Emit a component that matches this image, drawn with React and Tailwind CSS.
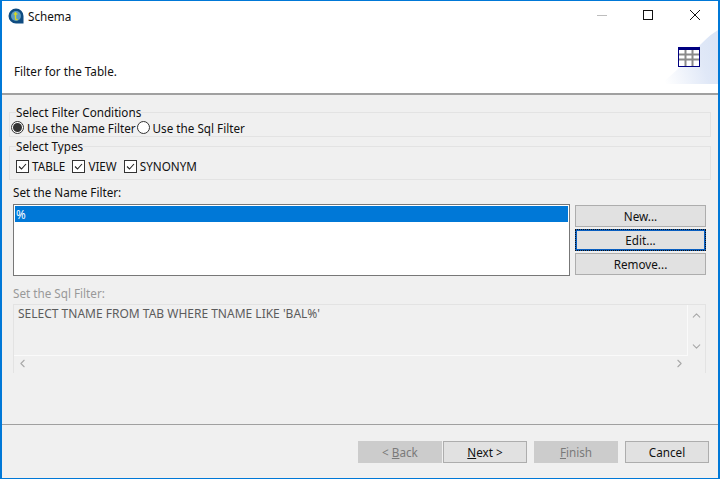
import { ChevronUp, ChevronDown, ChevronLeft, ChevronRight } from "lucide-react";

const font = { fontFamily: '"Noto Sans", "Open Sans", sans-serif' };

const AppIcon = () => (
  <svg width="16" height="16" viewBox="0 0 16 16" className="shrink-0">
    <path d="M8 .5a7.5 7.5 0 1 0 0 15h7.5V8A7.5 7.5 0 0 0 8 .5z" fill="#0f4c81" />
    <circle cx="8" cy="8" r="5" fill="#5f9cc4" />
    <path d="M7.5 4v6.5c0 1 .8 1.3 2.2 1M5.8 6h3.6" fill="none" stroke="#d8d820" strokeWidth="1.4" />
  </svg>
);

const TableIcon = () => (
  <svg width="22" height="20" viewBox="0 0 22 20" className="relative shrink-0">
    <rect x="0" y="0" width="22" height="20" fill="#000080" />
    <rect x="1" y="3" width="20" height="16" fill="#fff" />
    <path d="M1 7.5h20M1 12.5h20M7.5 3v16M14.5 3v16" stroke="#8a8a8a" strokeWidth="2" />
  </svg>
);

const CaptionButtons = () => (
  <svg width="104" height="11" viewBox="0 0 104 11" className="ml-auto mr-[17px]">
    <path d="M0 5.5h10" stroke="#bdbdbd" fill="none" />
    <rect x="46.5" y=".5" width="9" height="9" fill="none" stroke="#111" strokeWidth="1" />
    <path d="M93 0l10 10M103 0L93 10" stroke="#111" fill="none" />
  </svg>
);

const Radio = ({ checked, label }) => (
  <label className="flex items-center gap-[3px]">
    <span className="flex h-[13px] w-[13px] items-center justify-center rounded-full border border-[#333] bg-white">
      {checked && <span className="h-[9px] w-[9px] rounded-full bg-[#333]" />}
    </span>
    <span>{label}</span>
  </label>
);

const Check = ({ label }) => (
  <label className="flex items-center gap-[3px]">
    <span className="flex h-[13px] w-[13px] items-center justify-center border border-[#333] bg-white">
      <svg width="11" height="11" viewBox="0 0 11 11">
        <path d="M2 5.5l2.5 2.5L9 3" fill="none" stroke="#222" strokeWidth="1.1" />
      </svg>
    </span>
    <span>{label}</span>
  </label>
);

const Group = ({ title, className, children }) => (
  <fieldset className={`border border-[#e3e3e3] pl-[1px] ${className}`}>
    <legend className="ml-[5px] h-[13px] px-0 leading-[13px]">{title}</legend>
    {children}
  </fieldset>
);

const SideButton = ({ children, focused }) => (
  <button
    type="button"
    className={`flex h-[22px] w-[131px] items-center justify-center bg-[#e1e1e1] ${
      focused
        ? "border-2 border-[#0a5fc0] outline outline-dotted outline-[#111] -outline-offset-1"
        : "border border-[#adadad]"
    }`}
  >
    {children}
  </button>
);

const WizardButton = ({ children, disabled }) => (
  <button
    type="button"
    className={`flex h-[22px] w-[84px] items-center justify-center border ${
      disabled ? "border-[#cccccc] bg-[#cccccc] text-[#7a7a7a]" : "border-[#adadad] bg-[#e1e1e1] text-[#111]"
    }`}
  >
    {children}
  </button>
);

export default function App() {
  return (
    <div
      style={font}
      className="flex h-[479px] w-[720px] flex-col overflow-hidden border-x-2 border-y border-[#0078d7] bg-[#f0f0f0] text-[11.7px] leading-[16px] text-[#111]"
    >
      {/* barra de titulo */}
      <div className="flex h-[29px] shrink-0 items-center bg-white pl-[6px]">
        <AppIcon />
        <span className="ml-[4px]">Schema</span>
        <CaptionButtons />
      </div>

      {/* cabecera */}
      <div className="relative flex h-[65px] shrink-0 items-start justify-between border-b-2 border-[#a0a0a0] bg-white pb-[10px] pl-[12px]">
        <svg width="58" height="54" viewBox="0 0 58 54" className="absolute right-0 top-0">
          <defs>
            <linearGradient id="headerFade" x1="0" y1="0.7" x2="1" y2="0.4">
              <stop offset="0" stopColor="#ffffff" />
              <stop offset="0.7" stopColor="#e0e8f7" />
              <stop offset="1" stopColor="#dbe5f6" />
            </linearGradient>
          </defs>
          <path d="M0 54C24 38 38 12 58 0V54z" fill="url(#headerFade)" />
        </svg>
        <span className="mt-[33px]">Filter for the Table.</span>
        <div className="relative mr-[18px] mt-[17px]">
          <TableIcon />
        </div>
      </div>

      {/* contenido */}
      <div className="flex min-h-0 flex-1 flex-col pl-[7px] pr-[7px] pt-[11px]">
        <Group title="Select Filter Conditions" className="h-[31px]">
          <div className="-mt-[1px] flex h-[19px] items-center gap-[1px]">
            <Radio checked label="Use the Name Filter" />
            <Radio label="Use the Sql Filter" />
          </div>
        </Group>

        <Group title="Select Types" className="mt-[3px] h-[40px]">
          <div className="mt-[3px] flex h-[20px] items-center gap-[7px] pl-[5px]">
            <Check label="TABLE" />
            <Check label="VIEW" />
            <Check label="SYNONYM" />
          </div>
        </Group>

        <div className="mt-[4px] pl-[4px]">Set the Name Filter:</div>

        <div className="mt-[4px] flex gap-[5px] pl-[4px]">
          <div className="h-[72px] w-[557px] border border-[#777] bg-white p-[1px]">
            <div className="flex h-[16px] items-center bg-[#0078d7] pl-[1px] text-white">%</div>
          </div>
          <div className="flex flex-col gap-[2px] pt-[1px]">
            <SideButton>New...</SideButton>
            <SideButton focused>Edit...</SideButton>
            <SideButton>Remove...</SideButton>
          </div>
        </div>

        <div className="mt-[9px] pl-[4px] text-[#999]">Set the Sql Filter:</div>

        <div className="ml-[4px] mt-[3px] flex h-[69px] w-[693px] flex-col border-l border-r border-t border-[#e3e3e3] text-[#5c5c5c]">
          <div className="flex min-h-0 flex-1">
            <div className="flex-1 border-b border-r border-[#fafafa] pl-[4px] pt-[1px] text-[12px]">
              SELECT TNAME FROM TAB WHERE TNAME LIKE 'BAL%'
            </div>
            <div className="flex w-[17px] flex-col items-center justify-between pb-[3px] pt-[4px] text-[#a8a8a8]">
              <ChevronUp size={13} />
              <ChevronDown size={13} />
            </div>
          </div>
          <div className="flex h-[17px] shrink-0 items-center justify-between pb-[3px] pl-[2px] pr-[19px] text-[#a8a8a8]">
            <ChevronLeft size={13} />
            <ChevronRight size={13} />
          </div>
        </div>

        {/* botones del asistente */}
        <div className="-mx-[7px] mt-[51px] flex h-[40px] items-start border-t border-[#a0a0a0] pl-[356px] pt-[16px]">
          <WizardButton disabled>
            &lt;&nbsp;<span className="underline">B</span>ack
          </WizardButton>
          <div className="w-[1px]" />
          <WizardButton>
            <span className="underline">N</span>ext &gt;
          </WizardButton>
          <div className="w-[7px]" />
          <WizardButton disabled>
            <span className="underline">F</span>inish
          </WizardButton>
          <div className="w-[7px]" />
          <WizardButton>Cancel</WizardButton>
        </div>
      </div>
    </div>
  );
}
